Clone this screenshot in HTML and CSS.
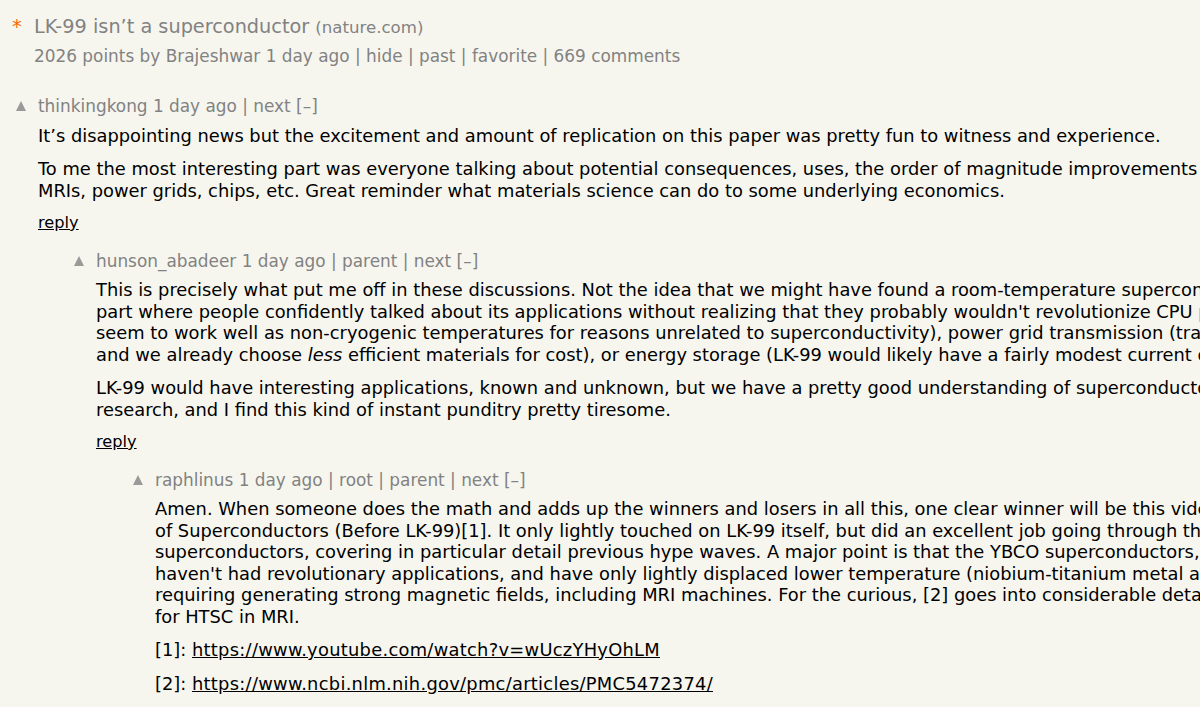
FILE: index.html
```html
<!DOCTYPE html>
<html>
<head>
<meta charset="utf-8">
<link rel="stylesheet" href="styles.css">
</head>
<body>
<div class="page">
  <div class="story">
    <div class="titleline">
      <span class="star">*</span>
      <span class="title">LK-99 isn’t a superconductor <span class="sitebit">(nature.com)</span></span>
    </div>
    <div class="subtext">2026 points by Brajeshwar 1 day ago | hide | past | favorite | 669 comments</div>
  </div>

  <div class="comments">
    <div class="comment">
      <div class="ind"></div>
      <div class="vote"><svg class="arrow" viewBox="0 0 10 10" width="10" height="10"><polygon points="5,0 10,10 0,10"/></svg></div>
      <div class="body">
        <div class="head">thinkingkong 1 day ago | next [–]</div>
        <div class="text">
          <p>It’s disappointing news but the excitement and amount of replication on this paper was pretty fun to witness and experience.</p>
          <p>To me the most interesting part was everyone talking about potential consequences, uses, the order of magnitude improvements to<br>MRIs, power grids, chips, etc. Great reminder what materials science can do to some underlying economics.</p>
        </div>
        <div class="reply"><a href="#">reply</a></div>
      </div>
    </div>

    <div class="comment">
      <div class="ind lvl1"></div>
      <div class="vote"><svg class="arrow" viewBox="0 0 10 10" width="10" height="10"><polygon points="5,0 10,10 0,10"/></svg></div>
      <div class="body">
        <div class="head">hunson_abadeer 1 day ago | parent | next [–]</div>
        <div class="text">
          <p>This is precisely what put me off in these discussions. Not the idea that we might have found a room-temperature superconductor, but the<br>part where people confidently talked about its applications without realizing that they probably wouldn't revolutionize CPU performance<br>seem to work well as non-cryogenic temperatures for reasons unrelated to superconductivity), power grid transmission (transmission losses<br>and we already choose <i>less</i> efficient materials for cost), or energy storage (LK-99 would likely have a fairly modest current density).</p>
          <p>LK-99 would have interesting applications, known and unknown, but we have a pretty good understanding of superconductors from decades of<br>research, and I find this kind of instant punditry pretty tiresome.</p>
        </div>
        <div class="reply"><a href="#">reply</a></div>
      </div>
    </div>

    <div class="comment">
      <div class="ind lvl2"></div>
      <div class="vote"><svg class="arrow" viewBox="0 0 10 10" width="10" height="10"><polygon points="5,0 10,10 0,10"/></svg></div>
      <div class="body">
        <div class="head">raphlinus 1 day ago | root | parent | next [–]</div>
        <div class="text">
          <p>Amen. When someone does the math and adds up the winners and losers in all this, one clear winner will be this video on the History<br>of Superconductors (Before LK-99)[1]. It only lightly touched on LK-99 itself, but did an excellent job going through the history of<br>superconductors, covering in particular detail previous hype waves. A major point is that the YBCO superconductors, discovered in 1986,<br>haven't had revolutionary applications, and have only lightly displaced lower temperature (niobium-titanium metal alloy) for applications<br>requiring generating strong magnetic fields, including MRI machines. For the curious, [2] goes into considerable detail on the prospects<br>for HTSC in MRI.</p>
          <p>[1]: <a href="#">https://www.youtube.com/watch?v=wUczYHyOhLM</a></p>
          <p>[2]: <a href="#">https://www.ncbi.nlm.nih.gov/pmc/articles/PMC5472374/</a></p>
        </div>
      </div>
    </div>
  </div>
</div>
</body>
</html>
```

FILE: styles.css
```css
html, body {
  margin: 0;
  padding: 0;
  overflow: hidden;
  background: #f6f6ef;
}
body {
  font-family: "DejaVu Sans", Verdana, sans-serif;
  color: #000;
}
.page {
  padding-top: 15px;
  width: 1600px;
}
.titleline {
  display: flex;
  align-items: baseline;
  line-height: 24px;
  white-space: nowrap;
}
.star {
  color: #ff6600;
  font-size: 19.5px;
  width: 21px;
  padding-left: 12px;
  box-sizing: content-box;
}
.title {
  color: #828282;
  font-size: 19.3px;
  margin-left: 1px;
}
.sitebit {
  font-size: 16.6px;
}
.subtext {
  color: #828282;
  font-size: 16.9px;
  line-height: 20px;
  margin-top: 6px;
  padding-left: 34px;
  white-space: nowrap;
}
.comments {
  margin-top: 30px;
}
.comment {
  display: flex;
  margin-bottom: 17.5px;
}
.ind { width: 0; flex: none; }
.ind.lvl1 { width: 58px; }
.ind.lvl2 { width: 117px; }
.vote {
  width: 38px;
  flex: none;
  padding-left: 16px;
  box-sizing: border-box;
  padding-top: 5px;
}
.arrow {
  display: block;
  fill: #9a9a9a;
}
.head {
  color: #828282;
  font-size: 16.9px;
  line-height: 20px;
  white-space: nowrap;
}
.text {
  font-size: 17.85px;
  line-height: 21.5px;
  white-space: nowrap;
  margin-top: 8.5px;
}
.text p {
  margin: 0 0 12px 0;
}
.text p:last-child {
  margin-bottom: 0;
}
.text a {
  color: #000;
  text-decoration: underline;
  letter-spacing: 0.28px;
}
.reply {
  font-size: 16.2px;
  line-height: 20px;
  margin-top: 12px;
}
.reply a {
  color: #000;
  text-decoration: underline;
}
```
